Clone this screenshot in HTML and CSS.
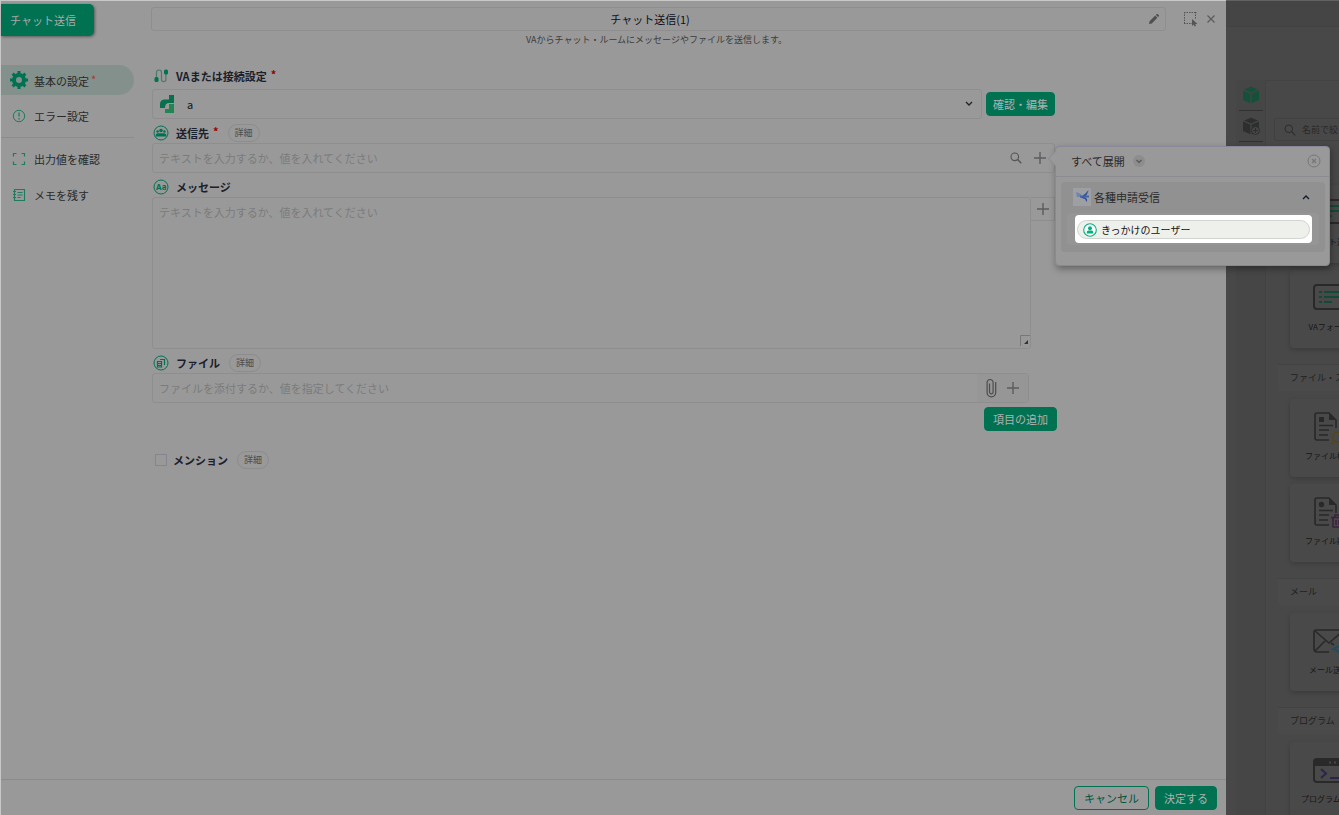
FILE: index.html
```html
<!DOCTYPE html>
<html lang="ja">
<head>
    <meta charset="UTF-8">
    <meta name="viewport" content="width=device-width, initial-scale=1.0">
    <title>チャット送信</title>
    <link rel="stylesheet" href="styles.css">
</head>
<body>
    <div class="editor">
        <header class="editor-header">
            <div class="tag-cell"><span class="tag">チャット送信</span></div>
            <div class="title-cell">
                <div class="title-box">
                    <input class="title-input" type="text" value="チャット送信(1)" aria-label="名前">
                    <svg class="pencil" width="12" height="12" viewBox="0 0 12 12"><path d="M1 11l.6-2.8L7.200 2.600l2.200 2.200L3.800 10.400z M7.900 1.900l.8-.8q.5-.4 1 0l1.200 1.200q.4.500 0 1l-.8.8z" fill="#505050"/></svg>
                </div>
                <p class="subtitle">VAからチャット・ルームにメッセージやファイルを送信します。</p>
            </div>
            <div class="window-tools">
                <button class="icon-button" aria-label="選択">
                    <svg width="14" height="14" viewBox="0 0 14 14"><path d="M0 .500h13M0 11.500h8M.5 0v12M11.500 0v7" fill="none" stroke="#555" stroke-dasharray="1.500 1"/><path d="M8 7v7l1.600-1.400 1 1.900 1.500-.8-.9-1.700H13.500z" fill="#555"/></svg>
                </button>
                <button class="icon-button" aria-label="閉じる">
                    <svg width="10" height="10" viewBox="0 0 10 10"><path d="M1.500 1.500l7 7M8.500 1.500l-7 7" stroke="#5c5c5c" stroke-width="1.300"/></svg>
                </button>
            </div>
        </header>

        <div class="editor-body">
            <nav class="side">
                <a class="side-item active" href="#basic">
                    <svg width="18" height="18" viewBox="0 0 18 18"><circle cx="9" cy="9" r="5" fill="none" stroke="#007252" stroke-width="4"/><path d="M9 0v4M9 14v4M0 9h4M14 9h4M2.600 2.600l2.800 2.800M12.600 12.600l2.800 2.800M15.400 2.600l-2.800 2.800M5.400 12.600l-2.800 2.800" stroke="#007252" stroke-width="3"/></svg>
                    <span>基本の設定<b class="required">*</b></span>
                </a>
                <a class="side-item" href="#error">
                    <svg width="18" height="18" viewBox="0 0 18 18"><circle cx="9" cy="9" r="5.700" fill="none" stroke="#1c7c60" stroke-width="1"/><path d="M9 5.500v4M9 11v1.500" stroke="#1c7c60" stroke-width="1.300"/></svg>
                    <span>エラー設定</span>
                </a>
                <hr class="side-line">
                <a class="side-item" href="#output">
                    <svg width="18" height="18" viewBox="0 0 18 18"><path d="M6.500 3.500h-3v3M11.500 3.500h3v3M6.500 14.500h-3v-3M11.500 14.500h3v-3" fill="none" stroke="#1c7c60" stroke-width="1.200"/></svg>
                    <span>出力値を確認</span>
                </a>
                <a class="side-item" href="#memo">
                    <svg width="18" height="18" viewBox="0 0 18 18"><path d="M4.500 3.500h10v11h-10zM3 5.500h3M3 8.500h3M3 11.500h3M7.500 6.500h5M7.500 9h5M7.500 11.500h3" fill="none" stroke="#1c7c60" stroke-width="1.100"/></svg>
                    <span>メモを残す</span>
                </a>
            </nav>

            <main class="form">
                <div class="label-row first">
                    <svg width="18" height="18" viewBox="0 0 18 18"><path d="M4.500 11V5.500a2.500 2.500 0 0 1 5 0v7a2.200 2.200 0 0 0 4.400 0V7" fill="none" stroke="#4b7a6b" stroke-width="1.200"/><rect x="2.500" y="10" width="4" height="5" rx="1.500" fill="#007252"/><rect x="12" y="2.500" width="4" height="5" rx="1.500" fill="#007252"/></svg>
                    <label for="connection">VAまたは接続設定</label><b class="required strong">*</b>
                </div>
                <div class="connect-row">
                    <div class="box grow">
                        <svg class="logo" width="16" height="18" viewBox="0 0 16 18"><path d="M10 0h5v8h-5q-4 0-4 5H1V9q0-4 4-4.500h5z" fill="#0a6f4c"/><path d="M10 9h5v9H6v-4h4z" fill="#228653"/></svg>
                        <select class="select" id="connection"><option>a</option></select>
                        <svg class="select-arrow" width="8" height="6" viewBox="0 0 8 6"><path d="M1 1l3 3 3-3" fill="none" stroke="#222" stroke-width="1.300"/></svg>
                    </div>
                    <button class="button small">確認・編集</button>
                </div>

                <div class="label-row">
                    <svg width="18" height="18" viewBox="0 0 18 18"><circle cx="9" cy="9" r="7" fill="none" stroke="#007252"/><circle cx="9" cy="6.500" r="1.800" fill="#007252"/><circle cx="5.600" cy="7.500" r="1.300" fill="#007252"/><circle cx="12.400" cy="7.500" r="1.300" fill="#007252"/><path d="M3.500 12.500q0-3.500 3-3.300h5q3-.2 3 3.300z" fill="#007252"/></svg>
                    <label for="dest">送信先</label><b class="required strong">*</b>
                    <button class="chip">詳細</button>
                </div>
                <div class="box picker">
                    <input class="field" id="dest" type="text" placeholder="テキストを入力するか、値を入れてください">
                    <button class="icon-button" aria-label="検索">
                        <svg width="12" height="12" viewBox="0 0 12 12"><circle cx="4.800" cy="4.800" r="3.800" fill="none" stroke="#555" stroke-width="1.100"/><path d="M7.600 7.600l3.700 3.700" stroke="#555" stroke-width="1.400"/></svg>
                    </button>
                    <button class="icon-button plus" aria-label="値を追加">
                        <svg width="12" height="12" viewBox="0 0 12 12"><path d="M6 0v12M0 6h12" stroke="#5c5c5c" stroke-width="1.400"/></svg>
                    </button>
                    <section class="popover">
                        <div class="popover-head">
                            <span>すべて展開</span>
                            <button class="round" aria-label="展開"><svg width="6" height="5" viewBox="0 0 6 5"><path d="M.5 1L3 3.500 5.500 1" fill="none" stroke="#555" stroke-width="1.200"/></svg></button>
                            <button class="icon-button popover-close" aria-label="閉じる"><svg width="14" height="14" viewBox="0 0 14 14"><circle cx="7" cy="7" r="6" fill="none" stroke="#777"/><path d="M5 5l4 4M9 5L5 9" stroke="#777" stroke-width="1.300"/></svg></button>
                        </div>
                        <div class="group">
                            <button class="group-head">
                                <svg width="18" height="18" viewBox="0 0 18 18"><path fill="#9d9fa3" d="M0 0h18v18H0z"/><path d="M3 4l5 2v3H4z" fill="#7283ad"/><path d="M15.500 2q-3 4-5.500 5.500l-3 1.500 3 1.500 2 .500 1.500 3q2-3-2-5 3-2 4-7z" fill="#314f9e"/><path d="M7 7.500h9v2H7z" fill="#4564a8"/></svg>
                                <span>各種申請受信</span>
                                <svg class="group-arrow" width="8" height="6" viewBox="0 0 8 6"><path d="M1 5l3-3 3 3" fill="none" stroke="#111b2d" stroke-width="1.400"/></svg>
                            </button>
                            <div class="group-body">
                                <div class="spot">
                                    <button class="value">
                                        <svg width="14" height="14" viewBox="0 0 14 14"><circle cx="7" cy="7" r="6.300" fill="#fff" stroke="#00b07d" stroke-width="1.100"/><circle cx="7" cy="5.200" r="2" fill="#00b07d"/><path d="M3.800 10.500V9q0-1.500 1.500-1.500h3.400q1.500 0 1.500 1.500v1.500z" fill="#00b07d"/></svg>
                                        <span>きっかけのユーザー</span>
                                    </button>
                                </div>
                            </div>
                        </div>
                    </section>
                </div>

                <div class="label-row">
                    <svg width="18" height="18" viewBox="0 0 18 18"><circle cx="9" cy="9" r="7" fill="none" stroke="#007252"/><text class="glyph" x="9" y="12" text-anchor="middle">Aa</text></svg>
                    <label for="message">メッセージ</label>
                </div>
                <div class="message-row">
                    <div class="message-box">
                        <textarea class="textarea" id="message" placeholder="テキストを入力するか、値を入れてください"></textarea>
                        <svg class="resizer" width="10" height="11" viewBox="0 0 10 11"><path d="M.5 11V.500H10" fill="none" stroke="#777"/><path d="M8 5v4H4zM5 7l3-2" fill="#333"/></svg>
                    </div>
                    <button class="icon-button message-plus" aria-label="値を追加">
                        <svg width="12" height="12" viewBox="0 0 12 12"><path d="M6 0v12M0 6h12" stroke="#5c5c5c" stroke-width="1.400"/></svg>
                    </button>
                </div>

                <div class="label-row">
                    <svg width="18" height="18" viewBox="0 0 18 18"><circle cx="9" cy="9" r="7" fill="none" stroke="#007252"/><path d="M8 5.500h4.500V11M5.500 7.500h4V13h-4z" fill="none" stroke="#007252" stroke-width="1.200"/><path d="M5.500 9.500h4M5.500 11.500h4" stroke="#007252"/></svg>
                    <label for="file">ファイル</label>
                    <button class="chip">詳細</button>
                </div>
                <div class="box file-box">
                    <input class="field" id="file" type="text" placeholder="ファイルを添付するか、値を指定してください">
                    <div class="file-tools">
                        <button class="icon-button" aria-label="添付">
                            <svg width="11" height="20" viewBox="0 0 11 20"><path d="M3.500 5.500v8.500a1.800 1.800 0 0 0 3.600 0V4.500a3 3 0 0 0-6 0v10a4.300 4.300 0 0 0 8.600 0V4" fill="none" stroke="#4c4c4c" stroke-width="1.200"/></svg>
                        </button>
                        <button class="icon-button" aria-label="値を追加">
                            <svg width="12" height="12" viewBox="0 0 12 12"><path d="M6 0v12M0 6h12" stroke="#5c5c5c" stroke-width="1.400"/></svg>
                        </button>
                    </div>
                </div>
                <div class="add-row"><button class="button">項目の追加</button></div>

                <div class="check-row">
                    <input class="check" type="checkbox" id="mention">
                    <label for="mention">メンション</label>
                    <button class="chip">詳細</button>
                </div>
            </main>
        </div>

        <footer class="editor-footer">
            <button class="button outline">キャンセル</button>
            <button class="button">決定する</button>
        </footer>
    </div>

    <aside class="palette">
        <div class="palette-bar"></div>
        <div class="palette-body">
            <div class="rail">
                <button class="rail-tab" aria-label="部品">
                    <svg width="18" height="18" viewBox="0 0 18 18"><path d="M9 .8l7 2.700-7 2.900-7-2.900zM1 4.500l7.400 3v9.700L1 14zM17 4.500l-7.400 3v9.700L17 14z" fill="#14503a"/></svg>
                </button>
                <button class="rail-tab" aria-label="部品を追加">
                    <svg width="18" height="18" viewBox="0 0 18 18"><path d="M9 .8l7 2.700-7 2.900-7-2.900zM1 4.500l7.400 3v9.700L1 14zM17 4.500l-7.400 3v9.700L17 14z" fill="#2d2f2e"/><circle cx="13.500" cy="13.500" r="4" fill="#454545" stroke="#2d2f2e"/><path d="M13.500 11v5M11 13.500h5" stroke="#2d2f2e"/></svg>
                </button>
            </div>
            <div class="parts">
                <div class="search">
                    <svg width="12" height="12" viewBox="0 0 12 12"><circle cx="4.800" cy="4.800" r="3.800" fill="none" stroke="#2d2d2d"/><path d="M7.600 7.600l3.700 3.700" stroke="#2d2d2d" stroke-width="1.200"/></svg>
                    <input class="search-input" type="text" placeholder="名前で絞り込み" aria-label="名前で絞り込み">
                </div>
                <div class="cards lead">
                    <a class="card" href="#chat">
                        <svg width="32" height="32" viewBox="0 0 32 32"><rect x="1" y="3" width="30" height="23" rx="2" fill="none" stroke="#292929" stroke-width="2"/><path d="M6 9h3M11 9h16M6 14h3M11 14h16M6 19h3M11 19h8" stroke="#124a36" stroke-width="2"/></svg>
                        <span>チャット送信</span>
                    </a>
                    <a class="card" href="#form">
                        <svg width="32" height="32" viewBox="0 0 32 32"><rect x="1" y="3" width="30" height="24" rx="3" fill="none" stroke="#292929" stroke-width="2"/><path d="M6 10h3M11 10h16M6 15h3M11 15h16M6 20h3M11 20h8" stroke="#124a36" stroke-width="2"/></svg>
                        <span>VAフォーム</span>
                    </a>
                </div>
                <h2 class="heading">ファイル・ストレージ</h2>
                <div class="cards">
                    <a class="card" href="#find">
                        <svg width="32" height="32" viewBox="0 0 32 32"><path d="M16 29H4q-2 0-2-2V4q0-2 2-2h12l7 7v8" fill="none" stroke="#292929" stroke-width="1.600"/><path d="M16 2v7h7zM6 6h5v5H6z" fill="#292929"/><path d="M6 14.500h14M6 19h10M6 24h9" stroke="#292929" stroke-width="1.400"/><circle cx="25" cy="26" r="5" fill="none" stroke="#554618" stroke-width="1.600"/><path d="M21.500 30l-3 3" stroke="#554618" stroke-width="2"/></svg>
                        <span>ファイル検索</span>
                    </a>
                    <a class="card" href="#remove">
                        <svg width="32" height="32" viewBox="0 0 32 32"><path d="M16 29H4q-2 0-2-2V4q0-2 2-2h12l7 7v8" fill="none" stroke="#292929" stroke-width="1.600"/><path d="M16 2v7h7z" fill="#292929"/><circle cx="8.500" cy="8.500" r="2.700" fill="#292929"/><path d="M6 14.500h14M6 19h10M6 24h9" stroke="#292929" stroke-width="1.400"/><path d="M18 21.500h13M20 21.500V31h9v-9.500M23 24v5M26 24v5M22 21v-2h5v2" fill="none" stroke="#3d223c" stroke-width="1.600"/></svg>
                        <span>ファイル削除</span>
                    </a>
                </div>
                <h2 class="heading">メール</h2>
                <div class="cards">
                    <a class="card" href="#mail">
                        <svg width="32" height="32" viewBox="0 0 32 32"><path d="M16 27H4q-3 0-3-3V7q0-2 2-2h26q2 0 2 2v11M2 6l14 12L30 6M2 26l10-10M18 18l3 2" fill="none" stroke="#292929" stroke-width="1.600"/><path d="M20 24l12-6-4 12-3-4z" fill="none" stroke="#1f4d5c" stroke-width="1.600"/></svg>
                        <span>メール送信</span>
                    </a>
                </div>
                <h2 class="heading">プログラム</h2>
                <div class="cards">
                    <a class="card" href="#program">
                        <svg width="32" height="32" viewBox="0 0 32 32"><rect x="1" y="5" width="30" height="23" rx="3" fill="none" stroke="#292929" stroke-width="2"/><path d="M1 5h30v7H1z" fill="#292929"/><path d="M16 8.500h2M21 8.500h2M26 8.500h2" stroke="#484848" stroke-width="2"/><path d="M8 15l5 4.500L8 24M17 24h10" fill="none" stroke="#29264d" stroke-width="2"/></svg>
                        <span>プログラム実行</span>
                    </a>
                </div>
            </div>
        </div>
    </aside>
</body>
</html>
```

FILE: styles.css
```css
* {
    box-sizing: border-box;
}
body {
    margin: 0;
    height: 100vh;
    display: flex;
    overflow: hidden;
    background-color: #484848;
    font-family: 'Noto Sans CJK JP', 'Noto Sans', sans-serif;
    font-size: 11px;
    line-height: 16px;
    color: #2a2a2a;
}
button, input, select, textarea {
    font: inherit;
    color: inherit;
}
button {
    padding: 0;
    border: none;
    background: none;
    cursor: pointer;
}
a {
    color: inherit;
    text-decoration: none;
}
svg {
    display: block;
    flex: none;
    overflow: visible;
}

/* Editor */
.editor {
    flex: 1;
    min-width: 0;
    display: flex;
    flex-direction: column;
    background-color: #999;
    border-top: 1px solid #c8c8c8;
    border-left: 1px solid #c8c8c8;
    z-index: 1;
}
.editor-header {
    display: flex;
    height: 64px;
    flex: none;
}
.tag-cell {
    width: 150px;
    padding-top: 3px;
}
.tag {
    display: inline-block;
    width: 93px;
    height: 32px;
    padding-left: 9px;
    line-height: 32px;
    background-color: #007252;
    color: #aaa;
    border-radius: 0 5px 5px 0;
    box-shadow: 1px 1px 3px rgba(0, 0, 0, 0.4);
}
.title-cell {
    flex: 1;
    padding-top: 6px;
}
.title-box {
    display: flex;
    align-items: center;
    height: 24px;
    padding-right: 5px;
    border: 1px solid #8e8e8e;
    border-radius: 3px;
}
.title-input {
    flex: 1;
    min-width: 0;
    padding: 0;
    border: none;
    outline: none;
    background: none;
    text-align: center;
    color: #0d0f1c;
}
.subtitle {
    margin: 1px 0 0;
    padding-right: 4px;
    font-size: 9px;
    text-align: center;
    color: #3c3c3c;
}
.window-tools {
    display: flex;
    align-items: center;
    gap: 8px;
    width: 60px;
    height: 36px;
    padding-left: 18px;
}
.icon-button {
    display: flex;
    align-items: center;
    justify-content: center;
}
.editor-body {
    flex: 1;
    display: flex;
    min-height: 0;
}

/* Side menu */
.side {
    width: 133px;
    display: flex;
    flex-direction: column;
    gap: 6px;
}
.side-item {
    display: flex;
    align-items: center;
    gap: 6px;
    height: 30px;
    padding-left: 9px;
    border-radius: 0 15px 15px 0;
}
.side-item.active {
    background-color: #84908b;
}
.side-line {
    width: 100%;
    margin: 0;
    border: none;
    border-top: 1px solid #8c8c8c;
}
.required {
    margin-left: 2px;
    font-weight: normal;
    color: #a5372d;
    vertical-align: 2px;
}
.required.strong {
    margin-left: -2px;
    margin-bottom: 4px;
    font-weight: bold;
    color: #990000;
}

/* Form */
.form {
    flex: 1;
    padding-left: 18px;
    padding-right: 171px;
}
.label-row {
    display: flex;
    align-items: center;
    gap: 6px;
    height: 24px;
    padding-top: 4px;
    font-weight: bold;
    color: #1a202c;
}
.label-row.first {
    padding-top: 0;
    padding-bottom: 2px;
}
.chip {
    width: 32px;
    height: 18px;
    margin-left: 3px;
    border: 1px solid #8c8c8c;
    border-radius: 9px;
    font-size: 9px;
    line-height: 16px;
    font-weight: normal;
    color: #4c4c4c;
}
.connect-row {
    display: flex;
    align-items: center;
    gap: 4px;
}
.box {
    display: flex;
    align-items: center;
    height: 30px;
    border: 1px solid #8e8e8e;
    border-radius: 3px;
}
.grow {
    flex: 1;
}
.logo {
    margin: 0 6px;
}
.select {
    flex: 1;
    appearance: none;
    padding: 0 6px;
    border: none;
    outline: none;
    background: none;
    color: #151515;
}
.select-arrow {
    margin-right: 8px;
}
.field {
    flex: 1;
    min-width: 0;
    padding: 0 6px;
    border: none;
    outline: none;
    background: none;
}
.field::placeholder, .textarea::placeholder {
    color: #7b7b7b;
    opacity: 1;
}
.button {
    height: 24px;
    padding: 0 8px;
    border: 1px solid #007252;
    border-radius: 4px;
    background-color: #007252;
    color: #b0b0b0;
    white-space: nowrap;
}
.button.small {
    padding: 0 6px;
}
.button.outline {
    padding: 0 9px;
    background: none;
    color: #00563e;
}
.picker {
    position: relative;
    gap: 12px;
    padding-right: 8px;
}
.message-row {
    display: flex;
    align-items: flex-start;
}
.message-box {
    flex: 1;
    position: relative;
}
.textarea {
    display: block;
    width: 100%;
    height: 152px;
    padding: 6px;
    border: 1px solid #8e8e8e;
    border-radius: 3px;
    outline: none;
    resize: none;
    background: none;
}
.resizer {
    position: absolute;
    right: 1px;
    bottom: 3px;
}
.message-plus {
    width: 24px;
    height: 24px;
    border: 1px solid #8e8e8e;
    border-left: none;
}
.file-box {
    margin-right: 26px;
}
.file-tools {
    display: flex;
    align-items: center;
    gap: 10px;
    height: 100%;
    padding: 0 9px;
    background-color: #969696;
}
.add-row {
    display: flex;
    justify-content: flex-end;
    margin-right: -2px;
    padding-top: 4px;
}
.check-row {
    display: flex;
    align-items: center;
    gap: 6px;
    padding-top: 20px;
    padding-left: 3px;
    font-weight: bold;
    color: #1a202c;
}
.check {
    appearance: none;
    width: 12px;
    height: 12px;
    margin: 0;
    border: 1px solid #858590;
}
.glyph {
    font-family: Inter, sans-serif;
    font-size: 8px;
    font-weight: bold;
    fill: #007252;
}
.editor-footer {
    display: flex;
    align-items: center;
    justify-content: flex-end;
    gap: 6px;
    height: 36px;
    padding-right: 9px;
    border-top: 1px solid #8a8a8a;
}

/* Value picker popover */
.popover {
    position: absolute;
    top: 2px;
    left: calc(100% + 1px);
    width: 275px;
    padding-bottom: 13px;
    background-color: #999;
    border: 1px solid #88889a;
    border-radius: 4px;
    box-shadow: 1px 3px 7px rgba(0, 0, 0, 0.35);
    z-index: 2;
}
.popover::before {
    content: '';
    position: absolute;
    top: 6px;
    left: -6px;
    width: 10px;
    height: 10px;
    background-color: #999;
    border: 1px solid #8e8e96;
    border-top: none;
    border-right: none;
    transform: rotate(45deg);
}
.popover-head {
    display: flex;
    align-items: center;
    gap: 8px;
    height: 30px;
    padding: 0 8px 1px 15px;
    border-bottom: 1px solid #8c8c90;
}
.round {
    display: flex;
    align-items: center;
    justify-content: center;
    width: 12px;
    height: 12px;
    border-radius: 6px;
    background-color: #8d8d8d;
}
.popover-close {
    margin-left: auto;
}
.group {
    margin: 5px 4px 0 5px;
    padding: 0 6px 7px;
    border-radius: 4px;
    background-color: #919191;
}
.group-head {
    display: flex;
    align-items: center;
    gap: 3px;
    width: 100%;
    height: 31px;
    padding: 0 9px 1px 6px;
}
.group-arrow {
    margin-left: auto;
}
.group-body {
    padding: 2px 7px 2px 8px;
    border-radius: 4px;
    background-color: #959595;
}
.spot {
    padding: 5px 2px 4px;
    border-radius: 4px;
    background-color: #fff;
}
.value {
    display: flex;
    align-items: center;
    gap: 4px;
    width: 100%;
    height: 19px;
    padding-left: 5px;
    border: 1px solid #d2d4d2;
    border-radius: 10px;
    background-color: #eef0eb;
    font-size: 10px;
    color: #111;
}

/* Parts palette */
.palette {
    width: 113px;
    flex: none;
    overflow: hidden;
    border-top: 1px solid #626262;
}
.palette-bar {
    height: 26px;
    background-color: #454545;
    border-bottom: 1px solid #424242;
}
.palette-body {
    display: flex;
    margin: 53px 0 0 10px;
}
.rail {
    width: 30px;
    height: 100vh;
    flex: none;
    padding: 0 3px;
    background-color: #464646;
    border-right: 1px solid #434343;
}
.rail-tab {
    display: flex;
    align-items: center;
    justify-content: center;
    width: 24px;
    height: 31px;
    border-bottom: 1px solid #303030;
}
.parts {
    flex: none;
    width: 196px;
    padding: 37px 8px 0;
    border-top: 1px solid #434343;
}
.search {
    display: flex;
    align-items: center;
    gap: 6px;
    height: 23px;
    padding-left: 9px;
    border: 1px solid #414141;
    border-radius: 2px;
}
.search-input {
    flex: 1;
    min-width: 0;
    padding: 0;
    border: none;
    outline: none;
    background: none;
    font-size: 9px;
}
.search-input::placeholder {
    color: #282828;
    opacity: 1;
}
.cards {
    display: grid;
    grid-template-columns: 78px;
    gap: 7px;
    padding: 8px 0 16px 16px;
}
.cards.lead {
    padding-top: 44px;
}
.card {
    display: flex;
    flex-direction: column;
    align-items: center;
    gap: 5px;
    height: 78px;
    padding-top: 12px;
    border-radius: 4px;
    background-color: #494949;
    box-shadow: 0 2px 5px rgba(0, 0, 0, 0.18);
    font-size: 8px;
    color: #151515;
    white-space: nowrap;
}
.heading {
    margin: 0 0 0 4px;
    padding-left: 12px;
    height: 27px;
    border-top: 1px solid #434343;
    background-color: #4a4a4a;
    font-size: 9px;
    line-height: 26px;
    font-weight: normal;
    color: #1f1f1f;
}
```
